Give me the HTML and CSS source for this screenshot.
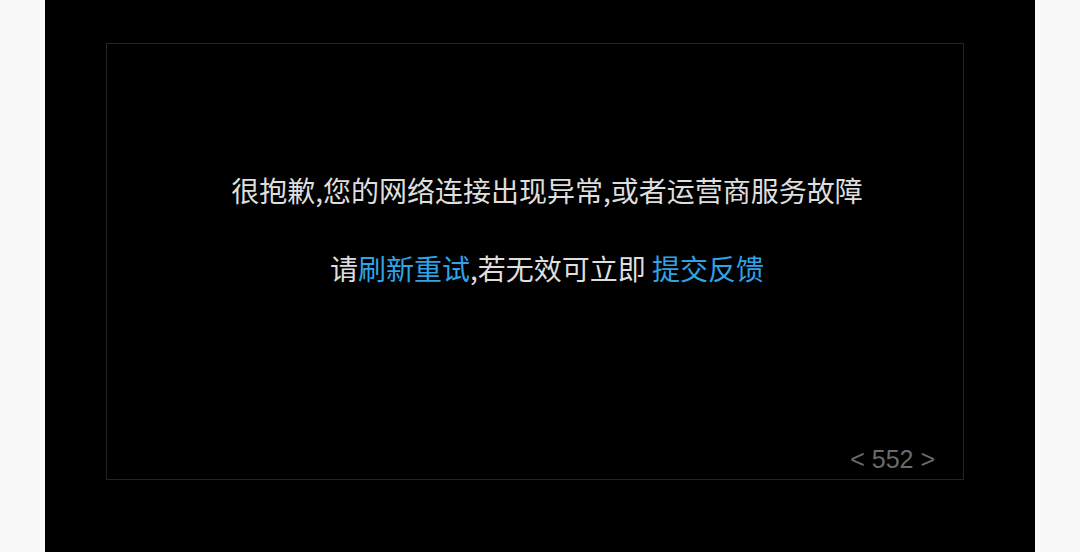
FILE: index.html
```html
<!DOCTYPE html>
<html lang="zh-CN">
<head>
<meta charset="utf-8">
<link rel="stylesheet" href="styles.css">
</head>
<body>
<div class="panel">
  <div class="box">
    <p class="msg">很抱歉,您的网络连接出现异常,或者运营商服务故障</p>
    <p class="msg second">请<a class="link">刷新重试</a>,若无效可立即 <a class="link">提交反馈</a></p>
    <div class="pager">&lt; 552 &gt;</div>
  </div>
</div>
</body>
</html>
```
FILE: styles.css
```css
html, body {
  margin: 0;
  padding: 0;
  background: #f8f8f8;
  height: 552px;
  overflow: hidden;
}
.panel {
  margin: 0 45px;
  height: 552px;
  background: #000;
  padding-top: 43px;
  padding-left: 61px;
  box-sizing: border-box;
}
.box {
  width: 858px;
  height: 437px;
  box-sizing: border-box;
  border: 1px solid #242424;
  display: flex;
  flex-direction: column;
  align-items: center;
  padding: 132px 28px 8px 52px;
}
.msg {
  margin: 0;
  font-family: "Noto Sans CJK SC", "Microsoft YaHei", sans-serif;
  font-size: 28px;
  line-height: 28px;
  color: #dedede;
  white-space: nowrap;
}
.second {
  margin-top: 50px;
}
.link {
  color: #2ea3e6;
}
.pager {
  margin-top: auto;
  align-self: flex-end;
  font-family: "Liberation Sans", Arial, sans-serif;
  font-size: 25px;
  line-height: 24px;
  color: #6a6a6a;
}
```
